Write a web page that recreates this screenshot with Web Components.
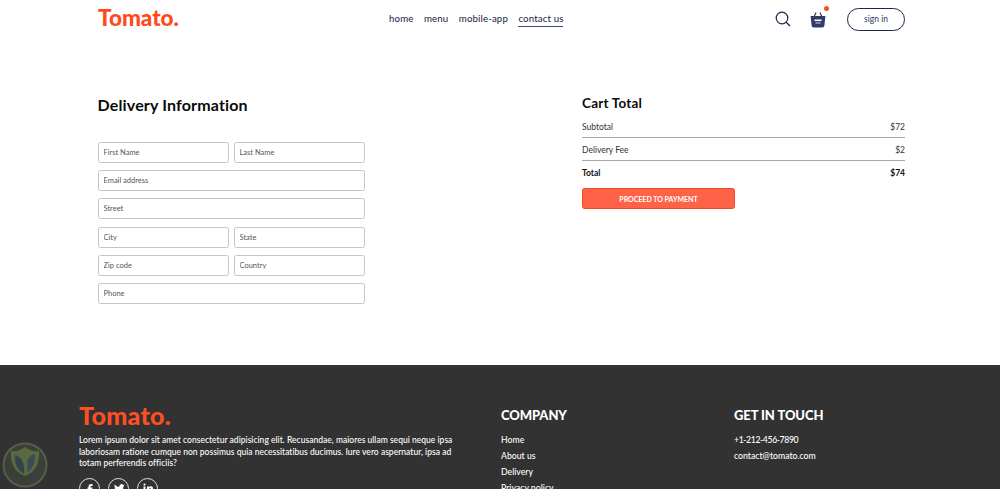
<!DOCTYPE html>
<html lang="en">
<head>
<meta charset="utf-8">
<title>Tomato</title>
<style>
  html, body { margin: 0; padding: 0; overflow: hidden; height: 489px; background: #fff; }
  body { font-family: Lato, "Liberation Sans", sans-serif; color: #1a1a2e; }
</style>
</head>
<body>
<app-navbar></app-navbar>
<place-order></place-order>
<app-footer></app-footer>
<trust-badge></trust-badge>

<script>
class AppNavbar extends HTMLElement {
  connectedCallback() {
    this.attachShadow({ mode: "open" }).innerHTML = `
      <style>
        :host { display: flex; align-items: center; justify-content: space-between; height: 38px; margin: 0 95px 0 98px; }
        .logo { font-size: 22.5px; line-height: 26px; margin-top: -3px; font-weight: 900; color: #ff4a1c; width: 100px; }
        ul { display: flex; gap: 10.5px; list-style: none; margin: 0 0 0 191px; padding: 0; font-size: 9.7px; color: #141a3c; }
        li { padding-bottom: 2px; letter-spacing: .12px; }
        .active { border-bottom: 1px solid #3d4778; }
        .right { display: flex; align-items: center; margin-left: auto; }
        .basket { position: relative; display: flex; margin: 0 21px 0 19px; }
        .dot { position: absolute; top: -5px; right: -3px; width: 5px; height: 5px; border-radius: 50%; background: #ff4a1c; }
        button { width: 58px; height: 23px; padding: 0; box-sizing: border-box; background: #fff; border: 1px solid #1e2548; border-radius: 12px; font: 8.5px Lato, sans-serif; color: #2f3a68; }
      </style>
      <div class="logo">Tomato.</div>
      <ul><li>home</li><li>menu</li><li>mobile-app</li><li class="active">contact us</li></ul>
      <div class="right">
        <svg width="16" height="16" viewBox="0 0 16 16" fill="none" stroke="#1e2548"><circle cx="7" cy="7" r="5.8" stroke-width="1.2"/><path d="M11.2 11.2 15 15" stroke-width="1.3"/></svg>
        <span class="basket">
          <svg width="16" height="17" viewBox="0 0 16 17"><path d="M4 6 6 1.5M12 6 10 1.5" stroke="#2f3a68" stroke-width="1.2" fill="none"/><path d="M.6 5h14.8l-1 9.5a2.2 2.2 0 0 1-2.2 2H3.8a2.2 2.2 0 0 1-2.2-2z" fill="#2f3a68"/><rect x="4.5" y="8.5" width="7" height="1.6" fill="#fff"/><rect x="5.5" y="11.5" width="5" height="1" fill="#cfd3e2"/></svg>
          <span class="dot"></span>
        </span>
        <button>sign in</button>
      </div>`;
  }
}

class FormField extends HTMLElement {
  connectedCallback() {
    const text = this.getAttribute("placeholder");
    this.attachShadow({ mode: "open" }).innerHTML = `
      <style>
        :host { display: block; flex: 1; min-width: 0; }
        input { display: block; width: 100%; height: 21px; box-sizing: border-box; padding: 0 5px; border: 1px solid #c5c5c5; border-radius: 2.5px; background: #fff; font: 7.5px Lato, sans-serif; outline: none; }
        input::placeholder { color: #555; opacity: 1; }
      </style>
      <input placeholder="${text}">`;
  }
}

class FormRow extends HTMLElement {
  connectedCallback() {
    this.attachShadow({ mode: "open" }).innerHTML = `
      <style>:host { display: flex; gap: 5px; }</style>
      <slot></slot>`;
  }
}

class DeliveryForm extends HTMLElement {
  connectedCallback() {
    this.attachShadow({ mode: "open" }).innerHTML = `
      <style>
        :host { display: block; width: 267px; margin-left: -.5px; }
        h2 { margin: 0 0 26.7px; font-size: 16px; line-height: 20px; font-weight: 700; color: #0b0b0b; letter-spacing: .16px; }
        .rows { display: flex; flex-direction: column; gap: 7.3px; }
      </style>
      <h2>Delivery Information</h2>
      <div class="rows"><slot></slot></div>`;
  }
}

class TotalRow extends HTMLElement {
  connectedCallback() {
    this.attachShadow({ mode: "open" }).innerHTML = `
      <style>
        :host { display: flex; justify-content: space-between; font-size: 8.5px; line-height: 11px; color: #333; }
        :host([strong]) { font-weight: 700; color: #111; margin-top: 7px; }
      </style>
      <span>${this.getAttribute("label")}</span><span>${this.getAttribute("value")}</span>`;
  }
}

class CartTotal extends HTMLElement {
  connectedCallback() {
    this.attachShadow({ mode: "open" }).innerHTML = `
      <style>
        :host { display: block; width: 323px; }
        h2 { margin: 0 0 11px; font-size: 13.5px; line-height: 16px; font-weight: 700; color: #0b0b0b; letter-spacing: .2px; }
        hr { height: 1px; border: 0; background: #a8a8a8; margin: 4px 0 6.5px; }
        hr.last { margin-bottom: 0; }
        button { display: block; width: 153px; height: 21px; margin-top: 9.500px; padding: 0; border: 1px solid #f04a25; border-radius: 2.5px; background: #ff6347; color: #fff; font: 700 7px Lato, sans-serif; }
      </style>
      <h2>Cart Total</h2>
      <total-row label="Subtotal" value="$72"></total-row>
      <hr>
      <total-row label="Delivery Fee" value="$2"></total-row>
      <hr class="last">
      <total-row strong label="Total" value="$74"></total-row>
      <button>PROCEED TO PAYMENT</button>`;
  }
}

class PlaceOrder extends HTMLElement {
  connectedCallback() {
    this.attachShadow({ mode: "open" }).innerHTML = `
      <style>
        :host { display: flex; justify-content: space-between; align-items: flex-start; height: 327px; box-sizing: border-box; padding: 57px 95px 0 98px; }
      </style>
      <delivery-form>
        <form-row><form-field placeholder="First Name"></form-field><form-field placeholder="Last Name"></form-field></form-row>
        <form-row><form-field placeholder="Email address"></form-field></form-row>
        <form-row><form-field placeholder="Street"></form-field></form-row>
        <form-row><form-field placeholder="City"></form-field><form-field placeholder="State"></form-field></form-row>
        <form-row><form-field placeholder="Zip code"></form-field><form-field placeholder="Country"></form-field></form-row>
        <form-row><form-field placeholder="Phone"></form-field></form-row>
      </delivery-form>
      <cart-total></cart-total>`;
  }
}

class SocialIcon extends HTMLElement {
  connectedCallback() {
    this.attachShadow({ mode: "open" }).innerHTML = `
      <style>
        :host { display: flex; align-items: center; justify-content: center; width: 21px; height: 21px; box-sizing: border-box; border: 1px solid #e2e2e2; border-radius: 50%; }
        svg { width: 12px; height: 12px; fill: #fff; }
      </style>
      <svg viewBox="0 0 24 24">${this.innerHTML}</svg>`;
  }
}

class AppFooter extends HTMLElement {
  connectedCallback() {
    this.attachShadow({ mode: "open" }).innerHTML = `
      <style>
        :host { display: grid; grid-template-columns: 378px 189px 189px; column-gap: 44px; height: 300px; box-sizing: border-box; padding: 38px 0 0 79px; background: #323232; color: #fff; }
        .logo { font-size: 25px; line-height: 28px; margin-top: -2px; font-weight: 900; color: #ff4f22; letter-spacing: .3px; }
        p { margin: 6px 0 8px; font-size: 8.5px; line-height: 11.6px; font-weight: 500; letter-spacing: .02px; }
        .social { display: flex; gap: 8px; }
        h3 { margin: 4px 0 11px; font-size: 13px; line-height: 16px; font-weight: 900; letter-spacing: -.1px; }
        ul { list-style: none; margin: 0; padding: 0; font-size: 8.7px; line-height: 11px; font-weight: 500; }
        li { margin-bottom: 5px; }
        .phone { letter-spacing: -.4px; }
      </style>
      <div>
        <div class="logo">Tomato.</div>
        <p>Lorem ipsum dolor sit amet consectetur adipisicing elit. Recusandae, maiores ullam sequi neque ipsa laboriosam ratione cumque non possimus quia necessitatibus ducimus. Iure vero aspernatur, ipsa ad totam perferendis officiis?</p>
        <div class="social">
          <social-icon><path d="M14 8h3V4h-3c-2.800 0-5 2.200-5 5v2H7v4h2v9h4v-9h3l1-4h-4V9c0-.6.4-1 1-1z"/></social-icon>
          <social-icon><path d="M23 5c-.8.400-1.700.600-2.600.800a4.500 4.500 0 0 0-7.700 4.100C9 9.700 5.700 8 3.500 5.200c-1.200 2-.600 4.600 1.400 6-.700 0-1.400-.200-2-.600 0 2.200 1.500 4.100 3.600 4.500-.700.200-1.400.200-2 .100.600 1.800 2.300 3.100 4.200 3.100A9 9 0 0 1 1 20.200 12.800 12.800 0 0 0 20.700 8.800c.900-.600 1.700-1.400 2.300-3.800z"/></social-icon>
          <social-icon><path d="M3 9h4v12H3zM5 3a2.200 2.200 0 1 1 0 4.400A2.200 2.200 0 0 1 5 3zM10 9h3.800v1.700c.6-1 1.900-2 3.800-2 4 0 4.400 2.600 4.400 6V21h-4v-5.500c0-1.500 0-3.200-2-3.200s-2 1.500-2 3.100V21h-4z"/></social-icon>
        </div>
      </div>
      <div>
        <h3>COMPANY</h3>
        <ul><li>Home</li><li>About us</li><li>Delivery</li><li>Privacy policy</li></ul>
      </div>
      <div>
        <h3>GET IN TOUCH</h3>
        <ul><li class="phone">+1-212-456-7890</li><li>contact@tomato.com</li></ul>
      </div>`;
  }
}

// faint round seal that sits over the bottom left corner of the footer
class TrustBadge extends HTMLElement {
  connectedCallback() {
    this.attachShadow({ mode: "open" }).innerHTML = `
      <style>
        :host { position: absolute; left: 2px; top: 442px; width: 46px; height: 46px; }
        svg { display: block; }
      </style>
      <svg width="46" height="46" viewBox="0 0 46 46">
        <circle cx="23" cy="23" r="21.500" fill="#3c3e39" stroke="#55604a" stroke-width="2"/>
        <path d="M9 9c5 1 10-1 14-4 4 3 9 5 14 4 1 11-3 21-14 25C12 30 8 20 9 9z" fill="#586a3e"/>
        <path d="M13 13c7 2 10 8 9 19-7-4-10-11-9-19z" fill="#34444e"/>
        <path d="M33 12c-4 1-7 4-8 8 1 4 1 7 0 11 6-4 8-11 8-19z" fill="#3a4c58"/>
      </svg>`;
  }
}

customElements.define("total-row", TotalRow);
customElements.define("cart-total", CartTotal);
customElements.define("form-field", FormField);
customElements.define("form-row", FormRow);
customElements.define("delivery-form", DeliveryForm);
customElements.define("place-order", PlaceOrder);
customElements.define("social-icon", SocialIcon);
customElements.define("app-navbar", AppNavbar);
customElements.define("app-footer", AppFooter);
customElements.define("trust-badge", TrustBadge);
</script>
</body>
</html>
